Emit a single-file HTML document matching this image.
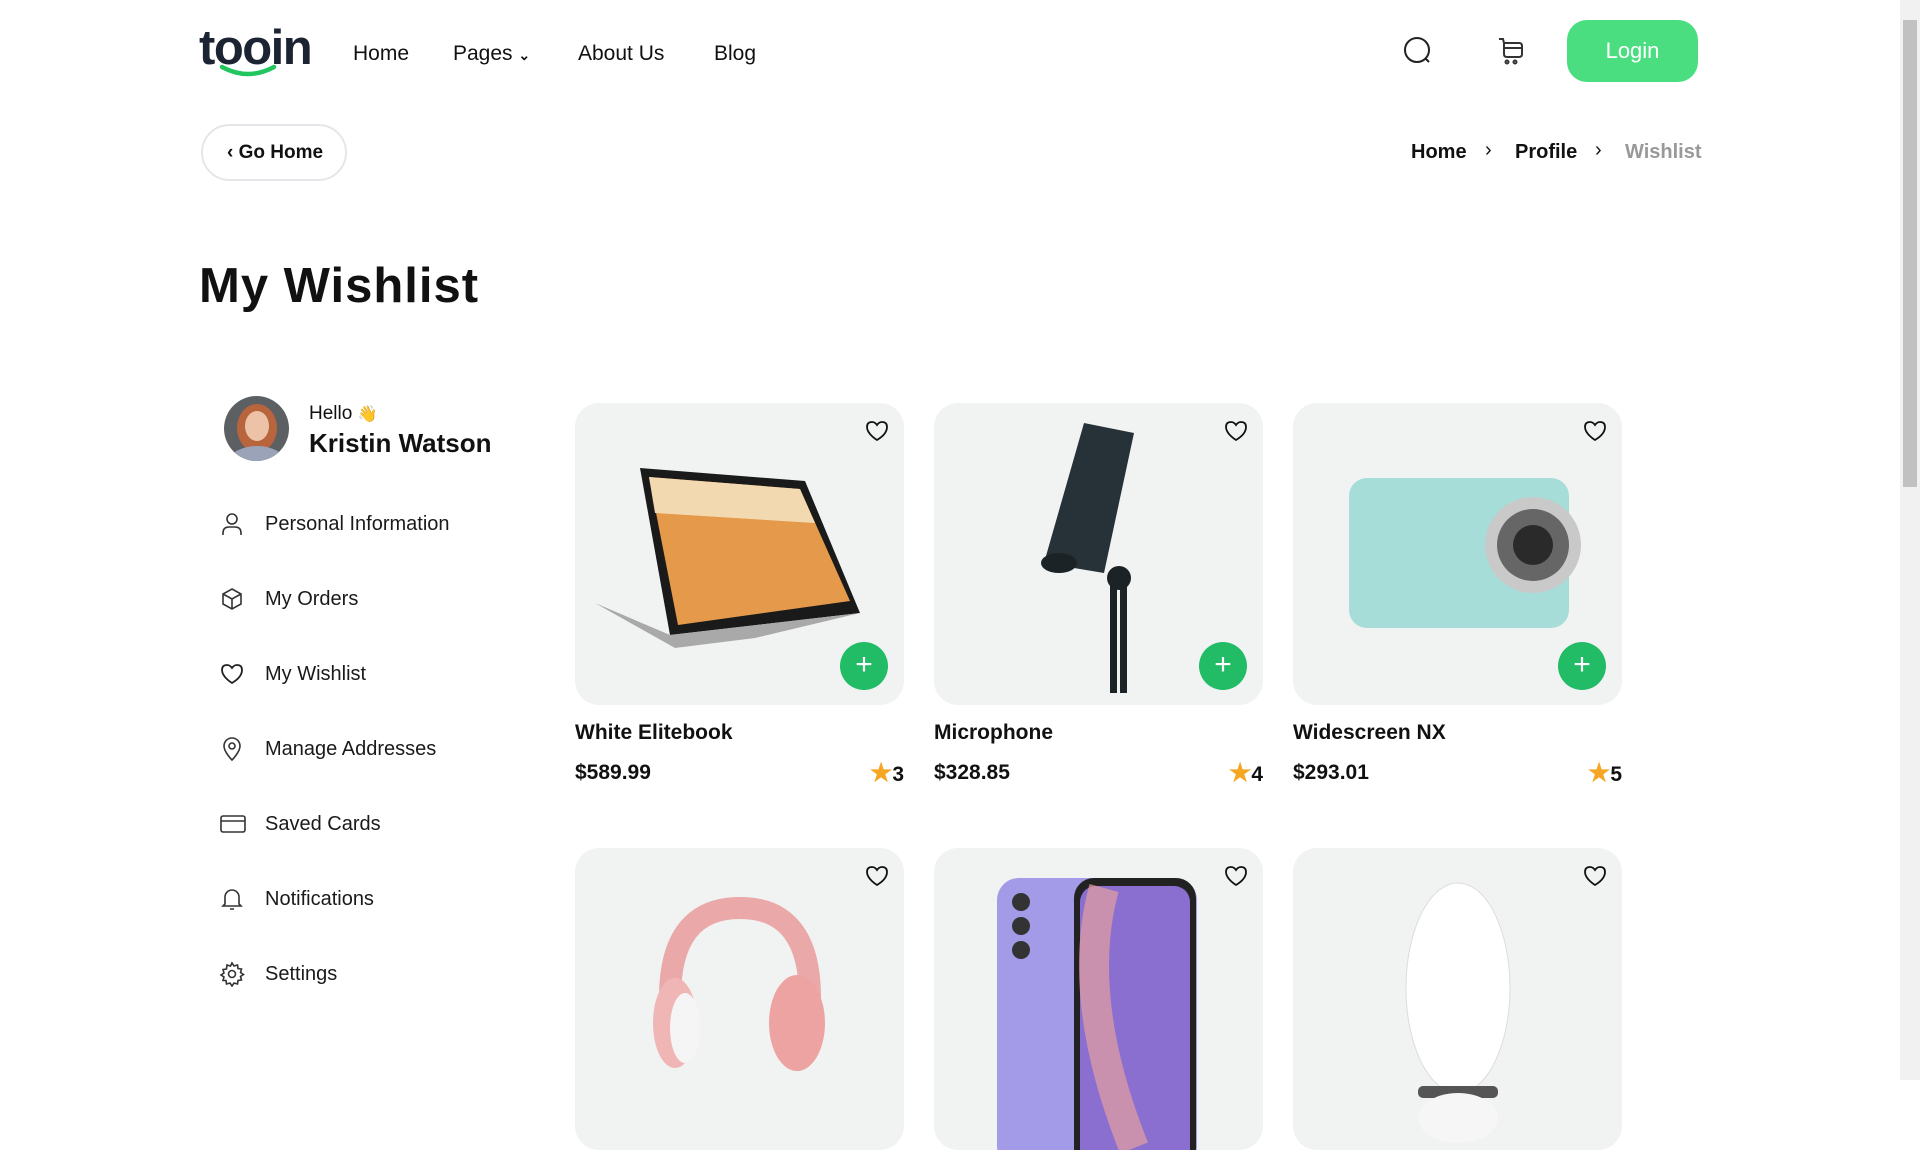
<!DOCTYPE html>
<html><head><meta charset="utf-8"><style>
*{margin:0;padding:0;box-sizing:border-box}
html,body{width:1920px;height:1080px;overflow:hidden;background:#fff;font-family:"Liberation Sans",sans-serif;color:#111}
.abs{position:absolute}
.nav a{position:absolute;top:42px;font-size:21px;color:#111;text-decoration:none}
.menu div{position:absolute;left:231px;font-size:20px;color:#1a1a1a}
.menu svg{position:absolute;left:-12px;top:-2px}
.menu span{position:absolute;left:34px;top:0;white-space:nowrap}
.card{position:absolute;width:329px}
.img{position:relative;height:302px;background:#f1f2f2;border-radius:24px;overflow:hidden}
.heart{position:absolute;right:14px;top:15px}
.plus{position:absolute;right:16px;bottom:15px;width:48px;height:48px;border-radius:50%;background:#22bb66;color:#fff;font-size:30px;line-height:46px;text-align:center;font-weight:300}
.name{margin-top:16px;font-size:21px;font-weight:600}
.price{margin-top:16px;font-size:21px;font-weight:600;position:relative}
.rate{position:absolute;right:0;top:-3px;font-size:21px}
.rate i{color:#f5a623;font-style:normal;font-size:25px}
</style></head><body>
<!-- logo -->
<div class="abs" style="left:199px;top:20px;font-size:49px;font-weight:700;color:#1c2333;letter-spacing:-1.5px">tooin</div>
<svg class="abs" style="left:218px;top:64px" width="60" height="14"><path d="M4 3 Q30 17 56 3" stroke="#22c55e" stroke-width="4.5" fill="none" stroke-linecap="round"/></svg>
<div class="nav">
<a style="left:353px">Home</a>
<a style="left:453px">Pages <span style="font-size:14px;font-weight:700">&#8964;</span></a>
<a style="left:578px">About Us</a>
<a style="left:714px">Blog</a>
</div>
<svg class="abs" style="left:1403px;top:36px" width="30" height="30" fill="none" stroke="#222" stroke-width="2"><circle cx="14" cy="14" r="12"/><path d="M23 23l3 3"/></svg>
<svg class="abs" style="left:1497px;top:36px" width="30" height="30" fill="none" stroke="#333" stroke-width="2"><path d="M2 3h4l1 4v11q0 3 3 3h12q3 0 3-3V10q0-3-3-3H7M8 12h17"/><circle cx="10" cy="26" r="1.5"/><circle cx="18" cy="26" r="1.5"/></svg>
<div class="abs" style="left:1567px;top:20px;width:131px;height:62px;border-radius:20px;background:#4ade80;color:#fff;font-size:22px;text-align:center;line-height:62px">Login</div>
<!-- go home -->
<div class="abs" style="left:201px;top:124px;width:146px;height:57px;border:2px solid #e6e6ea;border-radius:29px;font-size:19px;font-weight:600;line-height:53px;padding-left:24px">&#8249; Go Home</div>
<div class="abs" style="left:1411px;top:141px;font-size:20px;font-weight:600">Home</div>
<div class="abs" style="left:1485px;top:139px;font-size:20px">&#8250;</div>
<div class="abs" style="left:1515px;top:141px;font-size:20px;font-weight:600">Profile</div>
<div class="abs" style="left:1595px;top:139px;font-size:20px">&#8250;</div>
<div class="abs" style="left:1625px;top:141px;font-size:20px;font-weight:600;color:#999">Wishlist</div>
<div class="abs" style="left:199px;top:258px;font-size:49px;font-weight:700;letter-spacing:1px">My Wishlist</div>
<!-- profile -->
<svg class="abs" style="left:224px;top:396px" width="65" height="65"><defs><clipPath id="c"><circle cx="32.5" cy="32.5" r="32.5"/></clipPath></defs><g clip-path="url(#c)"><rect width="65" height="65" fill="#5d6063"/><ellipse cx="33" cy="32" rx="20" ry="24" fill="#b8643d"/><ellipse cx="33" cy="30" rx="12" ry="15" fill="#edc3a8"/><ellipse cx="33" cy="66" rx="28" ry="16" fill="#9aa3b8"/></g></svg>
<div class="abs" style="left:309px;top:403px;font-size:19px">Hello <span style="font-size:16px">👋</span></div>
<div class="abs" style="left:309px;top:428px;font-size:26px;font-weight:700">Kristin Watson</div>
<div class="menu">
<div style="top:513px"><svg width="26" height="26" fill="none" stroke="#333" stroke-width="1.6"><circle cx="13" cy="8" r="5"/><path d="M4 24v-2q0-6 6-6h6q6 0 6 6v2"/></svg><span>Personal Information</span></div>
<div style="top:588px"><svg width="26" height="26" fill="none" stroke="#333" stroke-width="1.6"><path d="M13 3l9 5v10l-9 5-9-5V8zM4 8l9 5 9-5M13 13v10"/></svg><span>My Orders</span></div>
<div style="top:663px"><svg width="26" height="26" fill="none" stroke="#222" stroke-width="1.8"><path d="M13 22S3 16 3 9q0-5 5-5 3 0 5 3 2-3 5-3 5 0 5 5 0 7-10 13z"/></svg><span>My Wishlist</span></div>
<div style="top:738px"><svg width="26" height="26" fill="none" stroke="#333" stroke-width="1.6"><path d="M13 24s8-8 8-14a8 8 0 0 0-16 0c0 6 8 14 8 14z"/><circle cx="13" cy="10" r="3"/></svg><span>Manage Addresses</span></div>
<div style="top:813px"><svg width="28" height="26" fill="none" stroke="#333" stroke-width="1.6"><rect x="2" y="5" width="24" height="16" rx="2"/><path d="M2 10h24"/></svg><span>Saved Cards</span></div>
<div style="top:888px"><svg width="26" height="26" fill="none" stroke="#333" stroke-width="1.6"><path d="M6 18V11a7 7 0 0 1 14 0v7l2 2H4zM11 23h4"/></svg><span>Notifications</span></div>
<div style="top:963px"><svg width="26" height="26" fill="none" stroke="#333" stroke-width="1.6"><circle cx="13" cy="13" r="3.5"/><path d="M13 2l2 3 3.5-1 .5 3.5 3.5.5-1 3.5 3 2-3 2 1 3.5-3.5.5-.5 3.5-3.5-1-2 3-2-3-3.5 1-.5-3.5L4 19.5l1-3.5-3-2 3-2-1-3.5 3.5-.5L8 4l3.5 1z"/></svg><span>Settings</span></div>
</div>
<!-- cards row 1 -->
<div class="card" style="left:575px;top:403px">
<div class="img"><svg width="329" height="302"><polygon points="65,65 230,78 285,210 95,232" fill="#1a1a1a"/><polygon points="74,74 225,86 275,198 103,222" fill="#e49a4a"/><polygon points="74,74 225,86 240,120 80,110" fill="#f3d9b0"/><polygon points="20,200 95,232 285,210 180,235 100,245" fill="#a9a9a9"/></svg>
<svg class="heart" width="26" height="26" fill="none" stroke="#111" stroke-width="1.8"><path d="M13 22S3 16 3 9q0-5 5-5 3 0 5 3 2-3 5-3 5 0 5 5 0 7-10 13z"/></svg><div class="plus">+</div></div>
<div class="name">White Elitebook</div><div class="price">$589.99<span class="rate"><i>★</i>3</span></div></div>
<div class="card" style="left:934px;top:403px">
<div class="img"><svg width="329" height="302"><polygon points="150,20 200,30 170,170 110,160" fill="#263238"/><ellipse cx="125" cy="160" rx="18" ry="10" fill="#1c2326"/><circle cx="185" cy="175" r="12" fill="#1c2326"/><rect x="176" y="180" width="7" height="110" fill="#1c2326"/><rect x="186" y="180" width="7" height="110" fill="#1c2326"/></svg>
<svg class="heart" width="26" height="26" fill="none" stroke="#111" stroke-width="1.8"><path d="M13 22S3 16 3 9q0-5 5-5 3 0 5 3 2-3 5-3 5 0 5 5 0 7-10 13z"/></svg><div class="plus">+</div></div>
<div class="name">Microphone</div><div class="price">$328.85<span class="rate"><i>★</i>4</span></div></div>
<div class="card" style="left:1293px;top:403px">
<div class="img"><svg width="329" height="302"><rect x="56" y="75" width="220" height="150" rx="18" fill="#a6ddd8"/><circle cx="240" cy="142" r="48" fill="#c9c9c9"/><circle cx="240" cy="142" r="36" fill="#666"/><circle cx="240" cy="142" r="20" fill="#2a2a2a"/></svg>
<svg class="heart" width="26" height="26" fill="none" stroke="#111" stroke-width="1.8"><path d="M13 22S3 16 3 9q0-5 5-5 3 0 5 3 2-3 5-3 5 0 5 5 0 7-10 13z"/></svg><div class="plus">+</div></div>
<div class="name">Widescreen NX</div><div class="price">$293.01<span class="rate"><i>★</i>5</span></div></div>
<!-- row 2 -->
<div class="card" style="left:575px;top:848px">
<div class="img"><svg width="329" height="302"><path d="M95 150 Q95 60 165 60 Q235 60 235 150" stroke="#eaa8a8" stroke-width="22" fill="none"/><ellipse cx="100" cy="175" rx="22" ry="45" fill="#f0b5b5"/><ellipse cx="222" cy="175" rx="28" ry="48" fill="#eea3a3"/><ellipse cx="110" cy="180" rx="15" ry="35" fill="#f5f5f5"/></svg>
<svg class="heart" width="26" height="26" fill="none" stroke="#111" stroke-width="1.8"><path d="M13 22S3 16 3 9q0-5 5-5 3 0 5 3 2-3 5-3 5 0 5 5 0 7-10 13z"/></svg></div></div>
<div class="card" style="left:934px;top:848px">
<div class="img"><svg width="329" height="302"><rect x="63" y="30" width="200" height="290" rx="22" fill="#a49be8"/><rect x="140" y="30" width="122" height="290" rx="20" fill="#222"/><rect x="146" y="38" width="110" height="280" rx="16" fill="#8a6fd0"/><path d="M170 40 Q140 150 200 300" stroke="#e6a0a0" stroke-width="30" fill="none" opacity=".7"/><circle cx="87" cy="54" r="9" fill="#333"/><circle cx="87" cy="78" r="9" fill="#333"/><circle cx="87" cy="102" r="9" fill="#333"/></svg>
<svg class="heart" width="26" height="26" fill="none" stroke="#111" stroke-width="1.8"><path d="M13 22S3 16 3 9q0-5 5-5 3 0 5 3 2-3 5-3 5 0 5 5 0 7-10 13z"/></svg></div></div>
<div class="card" style="left:1293px;top:848px">
<div class="img"><svg width="329" height="302"><ellipse cx="165" cy="140" rx="52" ry="105" fill="#fff" stroke="#ddd"/><rect x="125" y="238" width="80" height="12" rx="5" fill="#555"/><ellipse cx="165" cy="270" rx="40" ry="25" fill="#f6f6f6"/></svg>
<svg class="heart" width="26" height="26" fill="none" stroke="#111" stroke-width="1.8"><path d="M13 22S3 16 3 9q0-5 5-5 3 0 5 3 2-3 5-3 5 0 5 5 0 7-10 13z"/></svg></div></div>
<!-- scrollbar -->
<div class="abs" style="left:1900px;top:0;width:20px;height:1080px;background:#f1f1f1"></div>
<div class="abs" style="left:1903px;top:20px;width:14px;height:467px;background:#c1c1c1"></div>
</body></html>
